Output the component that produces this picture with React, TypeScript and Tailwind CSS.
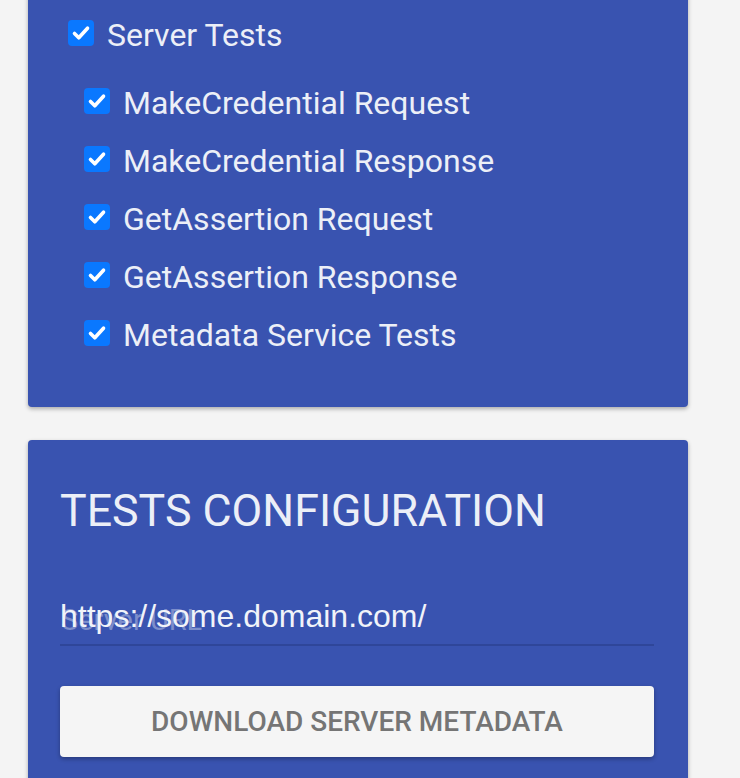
import React from 'react';

const SUB_TESTS = [
  'MakeCredential Request',
  'MakeCredential Response',
  'GetAssertion Request',
  'GetAssertion Response',
  'Metadata Service Tests',
];

function CheckMark(): React.JSX.Element {
  return (
    <svg width="26" height="26" viewBox="0 0 26 26" className="shrink-0">
      <rect x="0" y="0" width="26" height="26" rx="4" fill="#0a78ff" />
      <path
        d="M6.5 13.5 L10.8 17.8 L19.5 8.2"
        fill="none"
        stroke="#ffffff"
        strokeWidth="3.6"
        strokeLinecap="round"
        strokeLinejoin="round"
      />
    </svg>
  );
}

function CheckRow({ label }: { label: string }): React.JSX.Element {
  return (
    <label className="flex h-[58px] items-center gap-[13px]">
      <CheckMark />
      <span className="pt-[3px] text-[32px] leading-none">{label}</span>
    </label>
  );
}

export default function App(): React.JSX.Element {
  return (
    <div
      className="h-[778px] overflow-hidden bg-[#f4f4f4] px-[28px] text-[#eceff7]"
      style={{ fontFamily: 'Roboto, "Noto Sans", sans-serif' }}
    >
      {/* Test selection card */}
      <div className="-mt-[10px] w-[660px] rounded-[4px] bg-[#3953b0] pb-[45px] pl-[40px] pt-[14px] shadow-[0_2px_4px_rgba(0,0,0,0.3)]">
        <CheckRow label="Server Tests" />
        <div className="mt-[10px] pl-[16px]">
          {SUB_TESTS.map((name) => (
            <CheckRow key={name} label={name} />
          ))}
        </div>
      </div>

      {/* Configuration card */}
      <div className="mt-[33px] w-[660px] rounded-[4px] bg-[#3953b0] pb-[40px] pl-[32px] pr-[34px] pt-[45px] shadow-[0_2px_4px_rgba(0,0,0,0.3)]">
        <h2 className="text-[44.7px] font-normal uppercase leading-[52px]">Tests Configuration</h2>

        <div className="relative mt-[61px] h-[48px] border-b-2 border-[#2f4699] pt-[2px]">
          <span className="absolute left-[1px] top-[8px] text-[29px] leading-[29px] text-white/35">
            Server URL
          </span>
          <div
            className="relative text-[32px] leading-[32px] text-[#f1f3f9]"
            style={{ fontFamily: '"Liberation Sans", Arial, sans-serif' }}
          >
            https://some.domain.com/
          </div>
        </div>

        <button
          type="button"
          className="mt-[40px] flex h-[71px] w-full items-center justify-center rounded-[4px] bg-[#f5f5f5] text-[28px] font-medium uppercase text-[#757575] shadow-[0_2px_4px_rgba(0,0,0,0.3)]"
        >
          Download Server Metadata
        </button>
      </div>
    </div>
  );
}
